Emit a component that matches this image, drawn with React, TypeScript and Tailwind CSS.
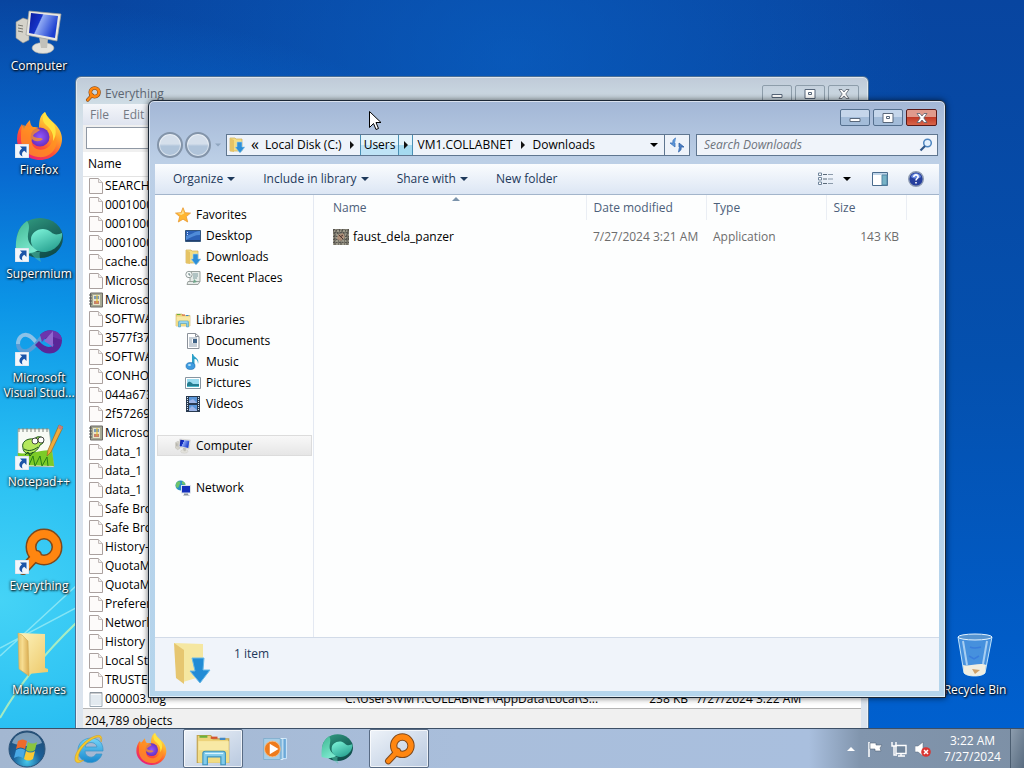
import React from 'react';

type IconProps = { className?: string };

const ComputerIcon = ({ className }: IconProps) => (
  <svg viewBox="0 0 48 48" className={className} aria-hidden="true">
    <defs>
      <linearGradient id="pcScreen" x1="0" y1="0" x2="1" y2=".4">
        <stop offset="0" stopColor="#0a1a9c" />
        <stop offset=".42" stopColor="#1533c8" />
        <stop offset=".46" stopColor="#8fa9f4" />
        <stop offset="1" stopColor="#1c3fd0" />
      </linearGradient>
    </defs>
    <path d="M1 14l7-4 6 2v20l-6 3-7-5z" fill="#d5d3ca" stroke="#8f8f8a" strokeWidth=".6" />
    <path d="M3 17l5 1M3 20l5 1M3 23l5 1" stroke="#77776f" strokeWidth="1" />
    <ellipse cx="28" cy="40" rx="11" ry="5.500" fill="#e4e3dd" stroke="#a5a59f" strokeWidth=".6" />
    <path d="M24 29l9 2-1 9h-6z" fill="#c2c1ba" />
    <path d="M14 3l32 3-4 27-31-6z" fill="#e9e8e2" stroke="#9c9c98" strokeWidth=".7" />
    <path d="M16 5l27 3-3 22-26-5z" fill="url(#pcScreen)" />
  </svg>
);

const FirefoxIcon = ({ className }: IconProps) => (
  <svg viewBox="0 0 48 48" className={className} aria-hidden="true">
    <defs>
      <linearGradient id="ffBody" x1=".8" y1="0" x2=".2" y2="1">
        <stop offset="0" stopColor="#fff44f" />
        <stop offset=".35" stopColor="#ffa52a" />
        <stop offset=".65" stopColor="#ff4f35" />
        <stop offset="1" stopColor="#e31587" />
      </linearGradient>
      <radialGradient id="ffGlobe">
        <stop offset="0" stopColor="#9059ff" />
        <stop offset="1" stopColor="#6a2fc0" />
      </radialGradient>
    </defs>
    <path d="M30 0c2 5 6 8 10 12 4 4 7 9 7 15 0 12-10 21-22 21S2 39 2 27c0-6 2-11 5-15l2 5c1-3 3-6 6-9 0 3 1 6 3 7 2 0 4 0 6 1 0-7 1-13 6-16z" fill="url(#ffBody)" />
    <circle cx="25" cy="25" r="9.500" fill="url(#ffGlobe)" />
    <path d="M8 13c3 1 6 2 9 2 3 0 6 1 8 3-2 2-6 3-7 6 4 3 7 1 10 3-3 3-8 3-11 0-2 7 5 13 13 10 8-3 9-12 5-19 5 4 8 9 6 16-3 8-10 12-18 11-10-1-18-9-17-20 0-5 0-9 2-12z" fill="#ff9520" opacity=".75" />
    <path d="M30 0c-3 5-3 9 1 13 5 4 8 9 7 16 4-6 3-12 1-17-4-4-8-7-9-12z" fill="#ffe340" />
  </svg>
);

const SupermiumIcon = ({ className }: IconProps) => (
  <svg viewBox="0 0 48 48" className={className} aria-hidden="true">
    <defs>
      <linearGradient id="smBall" x1=".2" y1="0" x2=".8" y2="1">
        <stop offset="0" stopColor="#7af0d6" />
        <stop offset="1" stopColor="#229c8c" />
      </linearGradient>
      <linearGradient id="smRing" x1="0" y1="0" x2=".6" y2="1">
        <stop offset="0" stopColor="#34a184" />
        <stop offset=".5" stopColor="#1f7366" />
        <stop offset="1" stopColor="#0f4d4b" />
      </linearGradient>
      <linearGradient id="smWedge" x1="0" y1="0" x2=".5" y2="1">
        <stop offset="0" stopColor="#3fb692" />
        <stop offset="1" stopColor="#7be8cd" />
      </linearGradient>
    </defs>
    <ellipse cx="25" cy="22" rx="23" ry="20" fill="url(#smRing)" />
    <path d="M12 5C3 11 0 22 1 36c9 3 16 2 23-2-8-3-12-8-11-16 1-5 2-9-1-13z" fill="url(#smWedge)" />
    <path d="M16 23c0-8 12-14 20-7 4 4 8 2 11 1 1 10-8 19-18 19-8 0-14-6-13-13z" fill="url(#smBall)" />
    <path d="M15 36c3 5 7 8 11 10-1-3-2-7-1-10z" fill="#53c9ae" opacity=".5" />
  </svg>
);

const VisualStudioIcon = ({ className }: IconProps) => (
  <svg viewBox="0 0 48 48" className={className} aria-hidden="true">
    <path d="M3 24c0-6 4-10 9-9 6 1 9 8 15 14" fill="none" stroke="#8cc2e8" strokeWidth="4" />
    <path d="M3 24c0 5 4 8 9 7 7-2 10-9 16-15" fill="none" stroke="#5a9cd6" strokeWidth="4" />
    <path d="M25 15c6-8 21-6 22 5 0 13-14 18-23 9l-4-4 4-4c6 7 11 7 15 4z" fill="#5a2699" />
    <path d="M25 15c6-7 21-6 22 5l-9-3c-4-2-7 0-11 5z" fill="#6c35ad" />
    <path d="M38 11v16l-9-6z" fill="#8f68cf" />
  </svg>
);

const NotepadIcon = ({ className }: IconProps) => (
  <svg viewBox="0 0 48 48" className={className} aria-hidden="true">
    <path d="M3 5h31l5 38-36-1z" fill="#f8fbf5" stroke="#9ba89a" strokeWidth=".7" />
    <path d="M4 4v4M8 4v4M12 4v4M16 4v4M20 4v4M24 4v4M28 4v4M32 4v4" stroke="#7b837d" strokeWidth="1" />
    <path d="M3 29c9 2 23-3 34-3l2 16-36-1z" fill="#7ccb27" />
    <path d="M10 41l2-8 2 8 4-9 2 10 5-10 2 10 5-9 1 9" fill="none" stroke="#287f17" />
    <path d="M8 24c-2-6 4-10 11-9l3-2c7-2 9 6 3 8-2 5-7 10-14 8-2-1-3-3-3-5z" fill="#b4e85c" stroke="#1e5d1c" strokeWidth="1" />
    <circle cx="20" cy="17" r="3" fill="#fff" stroke="#222" strokeWidth=".8" />
    <circle cx="26" cy="16" r="3" fill="#fff" stroke="#222" strokeWidth=".8" />
    <path d="M9 25c5 3 10 1 14-2M10 31l3-3 2 4 3-4" stroke="#174f1a" fill="none" />
    <path d="M44 1l4 2-12 25-4 4 1-6z" fill="#efac3c" stroke="#9b6722" strokeWidth=".7" />
    <path d="M44 1l4 2-2 3-3-2z" fill="#c27c83" />
  </svg>
);

// magnifier with a ring, the handle points down left
const EverythingIcon = ({ className }: IconProps) => (
  <svg viewBox="0 0 48 48" className={className} aria-hidden="true">
    <path d="M22 27L8 42" stroke="#7e481b" strokeWidth="10" strokeLinecap="round" />
    <circle cx="29" cy="19" r="13" fill="none" stroke="#7e481b" strokeWidth="11" />
    <path d="M22 27L8 42" stroke="#ff8610" strokeWidth="7" strokeLinecap="round" />
    <circle cx="29" cy="19" r="13" fill="none" stroke="#ff8610" strokeWidth="8" />
  </svg>
);

const FolderIcon = ({ className }: IconProps) => (
  <svg viewBox="0 0 48 48" className={className} aria-hidden="true">
    <defs>
      <linearGradient id="folderFront" x1="0" y1="0" x2="1" y2="0">
        <stop offset="0" stopColor="#e3c069" />
        <stop offset=".4" stopColor="#f7dd91" />
        <stop offset="1" stopColor="#d9ab50" />
      </linearGradient>
      <linearGradient id="folderBack" x1="0" y1="0" x2="1" y2="1">
        <stop offset="0" stopColor="#fdf3bd" />
        <stop offset="1" stopColor="#edc96a" />
      </linearGradient>
    </defs>
    <path d="M3 1l27 1v34l3 1v3l-20 2z" fill="url(#folderBack)" />
    <path d="M3 1l4 2 6 6 1 35L4 37z" fill="url(#folderFront)" stroke="#d0ab58" strokeWidth=".6" />
  </svg>
);

const DownloadsIcon = ({ className }: IconProps) => (
  <svg viewBox="0 0 48 48" className={className} aria-hidden="true">
    <path d="M7 3l29 1v32l-20 6z" fill="#f5e7a1" />
    <path d="M7 3l10 7v34L9 38z" fill="#e6c670" />
    <path d="M25 18h12l-1 12h7L33 43 23 31h5z" fill="#218bd5" stroke="#69bae8" />
  </svg>
);

// same folder, filled out to the edges so that it reads at small sizes
const DownloadsSmallIcon = ({ className = 'size-4 shrink-0' }: IconProps) => (
  <svg viewBox="0 0 16 16" className={className} aria-hidden="true">
    <path d="M1 1h5l1 1h6v12H1z" fill="#f3dd83" stroke="#cfae55" strokeWidth=".7" />
    <path d="M1 1l4 2v12l-4-1z" fill="#e5c365" />
    <path d="M8 5h5v5h3l-5 6-5-6h2z" fill="#2d8fd8" stroke="#9dd2f2" strokeWidth=".6" />
  </svg>
);

const RecycleBinIcon = ({ className }: IconProps) => (
  <svg viewBox="0 0 48 48" className={className} aria-hidden="true">
    <path d="M7 5l6 36c3 4 18 4 21 0l7-36z" fill="#7fbbee" fillOpacity=".55" stroke="#bfe3fb" />
    <path d="M12 33c4 2 18-3 23 0l-1 8c-3 4-18 4-21 0z" fill="#f0eee1" />
    <path d="M21 37l8 1-5 4z" fill="#cfa168" />
    <path d="M12 9l4 24M36 9l-4 23" stroke="#e6f6ff" strokeOpacity=".6" strokeWidth="2" />
    <path d="M19 15c4 2 7 1 11 0M18 24l5 3 5-3" stroke="#397ddc" fill="none" strokeWidth="1.500" />
    <ellipse cx="24" cy="5" rx="17" ry="3" fill="#5794d0" stroke="#e3f3ff" />
  </svg>
);

const ShortcutArrow = () => (
  <svg viewBox="0 0 14 14" className="absolute bottom-0.5 left-0 size-3.5" aria-hidden="true">
    <path d="M0 0h14v14H0z" fill="#f2f6fb" stroke="#b9c9da" strokeWidth=".6" />
    <path d="M5 2.500h6.500V9L9.300 6.800C7 8 6.500 10 7.500 12.500 3.500 11 3.500 7 7 4.600z" fill="#1b54a8" />
  </svg>
);

const FileIcon = () => (
  <svg viewBox="0 0 14 16" className="h-4 w-3.5 shrink-0" aria-hidden="true">
    <path d="M.5.5h9l4 4v11H.5z" fill="#fdfbfa" stroke="#aaa19f" />
    <path d="M9.500.5v4h4" fill="#eee" stroke="#c4bcba" />
  </svg>
);

const EventLogIcon = () => (
  <svg viewBox="0 0 14 16" className="h-4 w-3.5 shrink-0" aria-hidden="true">
    <path d="M1.500 1h12v14h-12z" fill="#a7a994" stroke="#6c6964" />
    <path d="M4 3h7v10H4z" fill="#e9e4c7" />
    <path d="M5 4h5v3H5z" fill="#7c9bb9" />
    <path d="M5 9h5v3H5z" fill="#c7806c" />
    <path d="M8 3v8" stroke="#e3b921" />
    <path d="M0 3h3M0 6h3M0 9h3M0 12h3" stroke="#555" />
  </svg>
);

const TextFileIcon = () => (
  <svg viewBox="0 0 14 16" className="h-4 w-3.5 shrink-0" aria-hidden="true">
    <path d="M1 1.500h12v14H1z" fill="#f8fbfd" stroke="#9caab5" />
    <path d="M2 5h10M2 7h10M2 9h10M2 11h10M2 13h10" stroke="#bccbd5" strokeWidth=".7" />
    <path d="M2 1v2M4 1v2M6 1v2M8 1v2M10 1v2M12 1v2" stroke="#777" strokeWidth=".7" />
  </svg>
);

const StarIcon = () => (
  <svg viewBox="0 0 16 16" className="size-4 shrink-0" aria-hidden="true">
    <path d="M8 .7l2 5 5.500.4-4.200 3.500 1.400 5.400L8 12.200 3.300 15l1.400-5.400L.5 6.100 6 5.700z" fill="#ffb52e" stroke="#e89a35" strokeWidth=".8" />
    <path d="M8 2.500l1.200 4-3 1.500-3.500-1.500 3.800-.2z" fill="#ffe08a" />
  </svg>
);

const DesktopIcon = () => (
  <svg viewBox="0 0 16 16" className="size-4 shrink-0" aria-hidden="true">
    <path d="M.5 2.500h15v11H.5z" fill="#2c62b8" stroke="#34567d" />
    <path d="M1 8c5-1 9-5 14-5v4c-5 0-9 2-14 5z" fill="#4f8bd8" />
    <path d="M1 12h14v1H1z" fill="#203f70" />
    <path d="M2 4h1v1H2zM2 6h1v1H2z" fill="#cfe2fb" />
  </svg>
);

const RecentIcon = () => (
  <svg viewBox="0 0 16 16" className="size-4 shrink-0" aria-hidden="true">
    <path d="M5 1.500h10v10H5zM3 11.500h12l-2 3H2z" fill="#e6ebe8" stroke="#9aa19e" />
    <path d="M8 4h5M8 6h5M8 8h4" stroke="#7c9b9e" />
    <circle cx="4" cy="4.500" r="3.200" fill="#f7faf9" stroke="#959f9d" />
    <path d="M4 3v2h1.500" stroke="#466" fill="none" strokeWidth=".8" />
    <path d="M9 9l3 3-4 1z" fill="#70a78c" />
  </svg>
);

const LibrariesIcon = ({ className = 'size-4 shrink-0' }: IconProps) => (
  <svg viewBox="0 0 32 32" className={className} aria-hidden="true">
    <path d="M2 4h12l2 3h14v21H2z" fill="#edd37a" stroke="#c1a24e" />
    <path d="M4 4h7v2H4z" fill="#69b13d" />
    <path d="M14 5h6v2h-6z" fill="#d4542f" />
    <path d="M22 6h5v2h-5z" fill="#4288c5" />
    <path d="M3 9h27v19H3z" fill="#f8e9a5" />
    <path d="M3 17h27v11H3z" fill="#f0dc84" />
    <path d="M7 30V20c0-1 1-2 2-2h16c1 0 2 1 2 2v10h-4v-7H11v7z" fill="#82cbea" stroke="#3d93bd" />
    <path d="M9 20h16" stroke="#d9f4ff" />
  </svg>
);

const DocumentsIcon = () => (
  <svg viewBox="0 0 16 16" className="size-4 shrink-0" aria-hidden="true">
    <path d="M2.500.5h8l3.500 3v12H2.500z" fill="#fff" stroke="#8b9199" />
    <path d="M10.500.5v3H14" fill="none" stroke="#8b9199" />
    <path d="M4 5h8M4 7h3M4 9h3M4 11h8M4 13h8" stroke="#8d9eae" />
    <path d="M8 6h4v4H8z" fill="#3f6387" />
  </svg>
);

const MusicIcon = () => (
  <svg viewBox="0 0 16 16" className="size-4 shrink-0" aria-hidden="true">
    <path d="M8 0c1 4 7 4 5 10 0-4-2-5-3.500-5v8H7V0z" fill="#2da1c9" />
    <ellipse cx="5.500" cy="12" rx="4.500" ry="3.500" fill="#3e9be0" stroke="#1969ac" strokeWidth=".6" />
    <ellipse cx="4.500" cy="11" rx="1.500" ry="1" fill="#b6e2fa" />
  </svg>
);

const PicturesIcon = () => (
  <svg viewBox="0 0 16 16" className="size-4 shrink-0" aria-hidden="true">
    <path d="M.5 2.500h15v11H.5z" fill="#fff" stroke="#8795a0" />
    <path d="M2 4h12v8H2z" fill="#9bdcf0" />
    <path d="M2 9c2-4 4-2 6 0h6v3H2z" fill="#257d91" />
    <path d="M2 11h12v1H2z" fill="#4cb7c9" />
  </svg>
);

const VideosIcon = () => (
  <svg viewBox="0 0 16 16" className="size-4 shrink-0" aria-hidden="true">
    <path d="M1 0h14v16H1z" fill="#293a50" />
    <path d="M4 1h8v6H4zM4 9h8v6H4z" fill="#5a96d9" />
    <path d="M4 5l4-2 4 4H4zM4 13l3-3 5 4v1H4z" fill="#9eb5e6" />
    <path d="M2.500 1v14M13.500 1v14" stroke="#dbe7ef" strokeDasharray="1 1" />
  </svg>
);

const NetworkIcon = () => (
  <svg viewBox="0 0 16 16" className="size-4 shrink-0" aria-hidden="true">
    <circle cx="5.500" cy="5.500" r="5" fill="#2a91c7" />
    <path d="M2 2c3-2 4 1 3 2s-1 4-3 4C0 6 1 3 2 2zM7 1c3 1 4 3 3 4L7 4z" fill="#6dc46c" />
    <path d="M6 5h10v8.500H6z" fill="#dce2eb" />
    <path d="M7 6h8v6.500H7z" fill="#1530bd" />
    <path d="M9 13.500h4v1l2 1H8l1-1z" fill="#89939f" />
  </svg>
);

const AppIcon = () => (
  <svg viewBox="0 0 16 16" className="size-4 shrink-0" aria-hidden="true">
    <path d="M0 0h16v16H0z" fill="#747166" />
    <path d="M0 1h16M1 4h15M0 7h16M0 10h16M0 13h16" stroke="#3a3b3a" strokeDasharray="2 1 1 2" />
    <path d="M1 2h15M0 6h16M0 9h15M0 12h16M0 15h16" stroke="#c7c5b1" strokeDasharray="1 2 2 1" />
    <path d="M3 0v16M8 0v16M13 0v16" stroke="#a9a795" strokeDasharray="1 3" />
    <path d="M5 6l5-2 2 4-4 4-4-2z" fill="#b9947c" opacity=".8" />
    <path d="M6 6l4 4M10 6l-3 2" stroke="#4b3431" />
  </svg>
);

const IEIcon = ({ className }: IconProps) => (
  <svg viewBox="0 0 32 32" className={className} aria-hidden="true">
    <defs>
      <linearGradient id="ieBlue" x1="0" y1="0" x2="0" y2="1">
        <stop offset="0" stopColor="#76d5f8" />
        <stop offset="1" stopColor="#1687ce" />
      </linearGradient>
    </defs>
    <path d="M30 18H12c0 7 9 8 11 3h6c-4 13-24 11-24-4C5 2 31 0 30 18zm-6-4c-1-6-11-6-12 0z" fill="url(#ieBlue)" stroke="#3c93c4" strokeWidth=".7" />
    <path d="M28 9c2-5 0-8-6-6C12 6 1 19 2 27c1 4 5 3 9 0-4 1-6 1-6-2C5 18 14 8 22 5c4-2 6-1 6 4z" fill="#f6c82c" stroke="#ce9b1f" strokeWidth=".5" />
  </svg>
);

const MediaPlayerIcon = ({ className }: IconProps) => (
  <svg viewBox="0 0 32 32" className={className} aria-hidden="true">
    <path d="M10 4h19v23H10z" fill="#6ba8d8" stroke="#d9efff" />
    <path d="M6 4h19v24H6z" fill="#8bbfe3" stroke="#e5f3fc" />
    <path d="M3 4h19v24H3z" fill="#a7cee7" stroke="#7eaccc" />
    <circle cx="13" cy="16" r="9" fill="#ee7b1c" stroke="#f7bd82" />
    <path d="M10 10l10 6-10 6z" fill="#fff" />
  </svg>
);

const StartOrb = () => (
  <svg viewBox="0 0 40 40" className="size-10" aria-hidden="true">
    <defs>
      <radialGradient id="orb" cx=".5" cy=".85" r=".85">
        <stop offset="0" stopColor="#45c8ec" />
        <stop offset=".45" stopColor="#1b5f98" />
        <stop offset="1" stopColor="#214a71" />
      </radialGradient>
    </defs>
    <circle cx="20" cy="20" r="18" fill="url(#orb)" stroke="#2b5379" />
    <path d="M5 14C9 0 31 0 35 14c-9 4-20 4-30 0z" fill="#c7dcec" opacity=".55" />
    <path d="M11 12c3-2 6-2 9 0l-2 8c-3-2-6-2-9 0z" fill="#ed6b2c" />
    <path d="M21 13c3 2 6 2 9 0l-2 8c-3 2-6 2-9 0z" fill="#8ac53f" />
    <path d="M9 21c3-2 6-2 9 0l-2 8c-3-2-6-2-9 0z" fill="#49a9e5" />
    <path d="M19 22c3 2 6 2 9 0l-2 8c-3 2-6 2-9 0z" fill="#fbc934" />
  </svg>
);

const Caret = ({ className = 'ml-1 h-1 w-2' }: IconProps) => (
  <svg viewBox="0 0 8 4" className={className} aria-hidden="true">
    <path d="M0 0h8L4 4z" fill="currentColor" />
  </svg>
);

const RightCaret = () => (
  <svg viewBox="0 0 4 8" className="h-2 w-1" aria-hidden="true">
    <path d="M0 0l4 4-4 4z" fill="#111" />
  </svg>
);

const desktopIcons = [
  { label: 'Computer', Icon: ComputerIcon },
  { label: 'Firefox', Icon: FirefoxIcon, shortcut: true },
  { label: 'Supermium', Icon: SupermiumIcon, shortcut: true },
  { label: 'Microsoft Visual Stud...', Icon: VisualStudioIcon, shortcut: true },
  { label: 'Notepad++', Icon: NotepadIcon, shortcut: true },
  { label: 'Everything', Icon: EverythingIcon, shortcut: true },
  { label: 'Malwares', Icon: FolderIcon },
];

type ResultRow = { name: string; kind?: 'log' | 'text'; path?: string; size?: string; date?: string };

const results: ResultRow[] = [
  { name: 'SEARCH' },
  { name: '00010000' },
  { name: '00010000' },
  { name: '00010000' },
  { name: 'cache.dat' },
  { name: 'Microsoft' },
  { name: 'Microsoft', kind: 'log' },
  { name: 'SOFTWARE' },
  { name: '3577f377' },
  { name: 'SOFTWARE' },
  { name: 'CONHOST' },
  { name: '044a6736' },
  { name: '2f57269b' },
  { name: 'Microsoft', kind: 'log' },
  { name: 'data_1' },
  { name: 'data_1' },
  { name: 'data_1' },
  { name: 'Safe Bro' },
  { name: 'Safe Bro' },
  { name: 'History-' },
  { name: 'QuotaMa' },
  { name: 'QuotaMa' },
  { name: 'Preferen' },
  { name: 'Network' },
  { name: 'History' },
  { name: 'Local St' },
  { name: 'TRUSTE' },
  {
    name: '000003.log',
    kind: 'text',
    path: 'C:\\Users\\VM1.COLLABNET\\AppData\\Local\\S...',
    size: '238 KB',
    date: '7/27/2024 3:22 AM',
  },
];

const favorites = [
  { label: 'Desktop', icon: <DesktopIcon /> },
  { label: 'Downloads', icon: <DownloadsSmallIcon /> },
  { label: 'Recent Places', icon: <RecentIcon /> },
];

const libraries = [
  { label: 'Documents', icon: <DocumentsIcon /> },
  { label: 'Music', icon: <MusicIcon /> },
  { label: 'Pictures', icon: <PicturesIcon /> },
  { label: 'Videos', icon: <VideosIcon /> },
];

function DesktopItem({ label, Icon, shortcut }: { label: string; Icon: React.FC<IconProps>; shortcut?: boolean }) {
  return (
    <button className="flex h-[104px] w-full flex-col items-center pt-2">
      <span className="relative block size-12">
        <Icon className="size-12" />
        {shortcut && <ShortcutArrow />}
      </span>
      <span className="mt-0.5 text-center leading-[15px] text-white [text-shadow:1px_1px_2px_#000,0_0_3px_#000]">{label}</span>
    </button>
  );
}

function WindowButtons({ active }: { active?: boolean }) {
  const base = active
    ? 'bg-linear-to-b from-[#c5d6eb] from-50% to-[#a3bcd9] to-50% border-[#55708f]'
    : 'border-[#8d9daa]';
  return (
    <div className="flex gap-[3px]">
      <button aria-label="Minimize" className={`flex h-[17px] w-[30px] items-center justify-center rounded-xs border ${base}`}>
        <svg viewBox="0 0 12 10" className="h-2.5 w-3" aria-hidden="true">
          <path d="M1 5.500h10v3H1z" fill="#fff" stroke="#58677a" />
        </svg>
      </button>
      <button aria-label="Maximize" className={`flex h-[17px] w-[30px] items-center justify-center rounded-xs border ${base}`}>
        <svg viewBox="0 0 12 10" className="h-2.5 w-3" aria-hidden="true">
          <path d="M1 .5h10v9H1zM4.500 3.500h3v2h-3z" fill="#fff" stroke="#58677a" />
        </svg>
      </button>
      <button
        aria-label="Close"
        className={`flex h-[17px] w-[31px] items-center justify-center rounded-xs border ${
          active ? 'border-[#5a1a18] bg-linear-to-b from-[#e09a8c] from-45% via-[#c23a26] via-50% to-[#d8654a]' : base
        }`}
      >
        <svg viewBox="0 0 12 10" className="h-2.5 w-3" aria-hidden="true">
          <path d="M1 .5h3l2 2.500L8 .5h3L7.800 5 11 9.500H8L6 7 4 9.500H1L4.200 5z" fill="#fff" stroke="#585f6c" strokeWidth=".8" />
        </svg>
      </button>
    </div>
  );
}

function EverythingWindow() {
  return (
    <section
      aria-label="Everything"
      className="absolute top-[76px] left-[75px] w-[794px] rounded-t-md border border-[#4a6f95] bg-[linear-gradient(180deg,#bfcad8_0,#cfdde5_27px,#dbe4ee_60px)] px-[7px] shadow-[inset_0_0_0_1px_rgba(255,255,255,0.5)]"
    >
      <header className="flex h-[27px] items-start justify-between pt-2 pr-0.5">
        <div className="flex items-center gap-1 pt-px pl-0.5 text-[#5c6672]">
          <EverythingIcon className="size-4" />
          <h1>Everything</h1>
        </div>
        <WindowButtons />
      </header>
      <nav className="flex h-[21px] items-center gap-3.5 bg-linear-to-b from-[#f4f6fa] to-[#dfe4ef] pl-[7px] text-[#747983]">
        <button>File</button>
        <button>Edit</button>
      </nav>
      <div className="bg-[#f0f0f0] px-[3px] pt-0.5 pb-[3px]">
        <input aria-label="Search files" className="block h-[22px] w-full border border-[#8f98a4] bg-white px-1" />
      </div>
      <div className="border-b border-[#b4b4b4] bg-white">
        <table className="w-full table-fixed">
          <colgroup>
            <col className="w-[258px]" />
            <col className="w-[265px]" />
            <col className="w-[86px]" />
            <col />
          </colgroup>
          <thead>
            <tr className="h-6 border-b border-[#e3e3e3]">
              <th className="p-0 pl-[5px] text-left font-normal">Name</th>
              <th /><th /><th />
            </tr>
          </thead>
          <tbody>
            {results.map((row, i) => (
              <tr key={i} className="h-[19px]">
                <td className="p-0 pl-1.5">
                  <span className="flex items-center gap-0.5 whitespace-nowrap">
                    {row.kind === 'log' ? <EventLogIcon /> : row.kind === 'text' ? <TextFileIcon /> : <FileIcon />}
                    {row.name}
                  </span>
                </td>
                <td className="p-0 pl-1 whitespace-nowrap">{row.path}</td>
                <td className="p-0 pr-1 text-right">{row.size}</td>
                <td className="p-0 pl-1">{row.date}</td>
              </tr>
            ))}
          </tbody>
        </table>
      </div>
      <footer className="h-[30px] bg-[#f0f0f0] pt-1 pl-0.5">204,789 objects</footer>
    </section>
  );
}

function AddressBar() {
  const roundButton =
    'size-[26px] shrink-0 rounded-full border-2 border-[#8394a9] bg-linear-to-b from-[#d5dfeb] from-45% to-[#b0c4da] to-55% shadow-[inset_0_0_0_1px_rgba(255,255,255,0.5)]';
  return (
    <div className="flex h-[22px] items-center">
      <div className="flex w-[69px] shrink-0 items-center gap-0.5">
        <button aria-label="Back" className={roundButton} />
        <button aria-label="Forward" className={roundButton} />
        <button aria-label="Recent pages" className="flex w-2.5 justify-center text-[#90a6c0]">
          <Caret className="h-1 w-1.5" />
        </button>
      </div>
      <div className="flex h-[22px] flex-1 items-stretch border border-[#5f7690] bg-[#eef3fa]">
        <span className="flex items-center pl-0.5">
          <DownloadsSmallIcon />
        </span>
        <button className="px-1.5 pb-0.5 text-base leading-none">«</button>
        <button className="pr-2">Local Disk (C:)</button>
        <span className="flex items-center pr-1.5"><RightCaret /></span>
        <button className="border-x border-[#4a90b5] bg-linear-to-b from-[#e3f3fb] from-50% to-[#bfe3f6] to-50% px-[3px]">Users</button>
        <button aria-label="Users folders" className="flex w-3.5 items-center justify-center border-r border-[#4a90b5] bg-linear-to-b from-[#e3f3fb] from-50% to-[#a5daf0] to-50%">
          <RightCaret />
        </button>
        <button className="px-1">VM1.COLLABNET</button>
        <span className="flex items-center px-1"><RightCaret /></span>
        <button className="px-1">Downloads</button>
        <button aria-label="Previous locations" className="ml-auto flex w-5 items-center justify-center">
          <Caret className="h-1 w-2" />
        </button>
        <button aria-label="Refresh" className="flex w-[25px] items-center justify-center border-l border-[#5f7690]">
          <svg viewBox="0 0 16 16" className="size-4" aria-hidden="true">
            <path d="M7 1C4 2 3.500 4 4 6H1l5 4V6" fill="#5d97d8" stroke="#3d72ba" strokeWidth=".8" />
            <path d="M9 15c3-1 3.500-3 3-5h3l-5-4v4" fill="#4b7fc4" stroke="#2f5fa5" strokeWidth=".8" />
          </svg>
        </button>
      </div>
      <div className="ml-1.5 flex h-[22px] w-[242px] items-center border border-[#5f7690] bg-[#f0f4fa] pr-1">
        <input
          type="search"
          aria-label="Search Downloads"
          placeholder="Search Downloads"
          className="min-w-0 flex-1 bg-transparent pl-[7px] outline-none placeholder:text-[#6d737c] placeholder:italic"
        />
        <svg viewBox="0 0 14 14" className="size-3.5" aria-hidden="true">
          <circle cx="8.500" cy="5" r="3.800" fill="#e4f1fd" stroke="#4e86c0" strokeWidth="1.500" />
          <path d="M6 8l-4.500 4.500" stroke="#2e5688" strokeWidth="2.200" />
        </svg>
      </div>
    </div>
  );
}

function Toolbar() {
  return (
    <div className="flex h-[31px] items-center border-b border-[#a3b5cb] bg-linear-to-b from-[#fafcfe] to-[#dce6f4] pr-[15px] pl-[18px] text-[#1e395b]">
      <button className="flex items-center">Organize<Caret /></button>
      <button className="ml-7 flex items-center">Include in library<Caret /></button>
      <button className="ml-7 flex items-center">Share with<Caret /></button>
      <button className="ml-7">New folder</button>
      <div className="ml-auto flex items-center">
        <button aria-label="Change your view" className="flex items-center">
          <svg viewBox="0 0 16 14" className="h-3.5 w-4" aria-hidden="true">
            <path d="M1.500 1h3v2.500h-3zM1.500 5.500h3V8h-3zM1.500 10h3v2.500h-3z" fill="#fff" stroke="#71869c" />
            <path d="M6 2.500h4M6 7h4M6 11.500h4" stroke="#5b6a79" />
            <path d="M11 2.500h5M11 7h5M11 11.500h5" stroke="#8b9aaa" />
          </svg>
          <Caret className="ml-2.5 h-1 w-2 text-black" />
        </button>
        <button aria-label="Show the preview pane" className="ml-[21px]">
          <svg viewBox="0 0 16 14" className="h-3.5 w-4" aria-hidden="true">
            <path d="M.5.5h15v13H.5z" fill="#fff" stroke="#496b8d" />
            <path d="M1 1h14v2H1z" fill="#bed4e8" />
            <path d="M10 3h5v10h-5z" fill="#77b3c7" stroke="#5587a5" />
          </svg>
        </button>
        <button aria-label="Get help" className="ml-5">
          <svg viewBox="0 0 16 16" className="size-4" aria-hidden="true">
            <circle cx="8" cy="8" r="7.300" fill="#263f9d" stroke="#8d9bb3" strokeWidth="1.400" />
            <path d="M3 6c1-5 9-5 10 0-3 2-7 2-10 0z" fill="#6d8ce0" />
            <path d="M5.800 6c0-3 4.500-2.700 4.300 0C10 7.500 8 7.600 8 9.500M8 11v1.500" stroke="#fff" strokeWidth="1.600" fill="none" />
          </svg>
        </button>
      </div>
    </div>
  );
}

function SideLink({ icon, label, nested, selected }: { icon: React.ReactNode; label: string; nested?: boolean; selected?: boolean }) {
  return (
    <a
      href="#"
      className={`flex h-[21px] items-center gap-[5px] border ${nested ? 'pl-[27px]' : 'pl-[17px]'} ${
        selected ? 'border-[#dcdcdc] bg-linear-to-b from-[#f8f8f8] to-[#e6e6e6]' : 'border-transparent'
      }`}
    >
      {icon}
      {label}
    </a>
  );
}

function ExplorerWindow() {
  return (
    <section
      aria-label="Downloads"
      className="absolute top-[100px] left-[148px] flex h-[598px] w-[798px] flex-col rounded-t-md border border-[#1b2735] bg-[linear-gradient(180deg,#a3b7d6_0,#bccfe6_60px,#b9d1ea_200px,#b5d5ec_100%)] px-1.5 pb-1.5 shadow-[0_0_6px_rgba(0,0,0,0.6),inset_0_0_0_1px_rgba(255,255,255,0.6)]"
    >
      <header className="flex h-[33px] justify-end pt-2 pr-0.5">
        <WindowButtons active />
      </header>
      <div className="pr-px pb-2 pl-0.5">
        <AddressBar />
      </div>
      <Toolbar />
      <div className="flex min-h-0 flex-1 bg-[#fdfefe]">
        <nav className="flex w-[159px] flex-col gap-[21px] border-r border-[#e4e9f2] pt-[9px] pr-px pl-0.5">
          <div>
            <SideLink icon={<StarIcon />} label="Favorites" />
            {favorites.map((item) => (
              <SideLink key={item.label} nested {...item} />
            ))}
          </div>
          <div>
            <SideLink icon={<LibrariesIcon />} label="Libraries" />
            {libraries.map((item) => (
              <SideLink key={item.label} nested {...item} />
            ))}
          </div>
          <SideLink icon={<ComputerIcon className="size-4 shrink-0" />} label="Computer" selected />
          <SideLink icon={<NetworkIcon />} label="Network" />
        </nav>
        <div className="relative flex-1 pl-3">
          <svg viewBox="0 0 8 4" className="absolute top-0.5 left-[138px] h-1 w-2" aria-hidden="true">
            <path d="M0 4l4-4 4 4z" fill="#7b93ab" />
          </svg>
          <table className="w-[580px] table-fixed">
            <colgroup>
              <col className="w-[260px]" />
              <col className="w-[120px]" />
              <col className="w-[120px]" />
              <col className="w-20" />
            </colgroup>
            <thead>
              <tr className="h-[25px] text-left text-[#4c607a]">
                {['Name', 'Date modified', 'Type', 'Size'].map((heading) => (
                  <th key={heading} className="border-r border-[#eaeef4] p-0 pl-[7px] font-normal">{heading}</th>
                ))}
              </tr>
            </thead>
            <tbody>
              <tr className="h-[33px] text-[#6d6d6d]">
                <td className="p-0 pl-[7px] text-black">
                  <span className="flex items-center gap-1"><AppIcon />faust_dela_panzer</span>
                </td>
                <td className="p-0 pl-[7px] whitespace-nowrap">7/27/2024 3:21 AM</td>
                <td className="p-0 pl-[7px]">Application</td>
                <td className="p-0 pr-[7px] text-right">143 KB</td>
              </tr>
            </tbody>
          </table>
        </div>
      </div>
      <footer className="flex h-[54px] border-t border-[#d2dbe8] bg-[#f0f4fa] pl-3 text-[#1e395b]">
        <DownloadsIcon className="mt-0.5 size-12" />
        <p className="mt-2 ml-[19px]">1 item</p>
      </footer>
    </section>
  );
}

const tasks = [
  { label: 'Internet Explorer', icon: <IEIcon className="size-8" /> },
  { label: 'Firefox', icon: <FirefoxIcon className="size-8" /> },
  { label: 'Windows Explorer', icon: <LibrariesIcon className="size-9" />, open: true },
  { label: 'Windows Media Player', icon: <MediaPlayerIcon className="size-7" /> },
  { label: 'Supermium', icon: <SupermiumIcon className="size-8" /> },
  { label: 'Everything', icon: <EverythingIcon className="size-8" />, open: true },
];

function Taskbar() {
  return (
    <footer className="relative z-10 flex h-10 shrink-0 items-stretch border-t border-[#3c4f66] bg-[linear-gradient(90deg,#a3b7d1_0,#a9bedb_45%,#a9bfde_79%,#8195ad_84%,#7d90a6_100%)] text-white">
      <button aria-label="Start" className="flex w-[59px] items-center pl-[7px]">
        <StartOrb />
      </button>
      <div className="flex gap-0.5">
        {tasks.map((task) => (
          <button
            key={task.label}
            aria-label={task.label}
            className={`flex w-[60px] items-center justify-center ${
              task.open ? 'rounded-xs border border-[#586b84] bg-linear-to-br from-[#eef3f9] to-[#b9c9df] shadow-[inset_0_0_0_1px_rgba(255,255,255,0.7)]' : ''
            }`}
          >
            {task.icon}
          </button>
        ))}
      </div>
      <div className="ml-auto flex items-center">
        <button aria-label="Show hidden icons" className="mr-3">
          <svg viewBox="0 0 8 4" className="h-1 w-2" aria-hidden="true">
            <path d="M0 4l4-4 4 4z" fill="#fff" />
          </svg>
        </button>
        <div className="flex gap-2">
          <svg viewBox="0 0 16 16" className="size-4" aria-hidden="true">
            <path d="M2 1v15" stroke="#fff" strokeWidth="1.500" />
            <path d="M3 2h6v2h6l-2 3 1 3H8V8H3z" fill="#fff" stroke="#56677b" strokeWidth=".6" />
          </svg>
          <svg viewBox="0 0 16 16" className="size-4" aria-hidden="true">
            <path d="M5 4.500h10v8H5z" fill="#71859b" stroke="#fff" strokeWidth="1.400" />
            <path d="M7 15h7M10 13v2" stroke="#fff" strokeWidth="1.400" />
            <path d="M1 1v4h4V1M3 5v9h3" stroke="#fff" fill="none" strokeWidth="1.400" />
          </svg>
          <svg viewBox="0 0 16 16" className="size-4" aria-hidden="true">
            <path d="M0 5h3l5-4v14l-5-4H0z" fill="#fff" stroke="#56677b" strokeWidth=".5" />
            <circle cx="11" cy="11" r="4.800" fill="#da3532" />
            <path d="M9 9l4 4M13 9l-4 4" stroke="#fff" strokeWidth="1.500" />
          </svg>
        </div>
        <p className="w-[79px] pl-1 text-center leading-4 whitespace-nowrap">
          3:22 AM
          <br />
          7/27/2024
        </p>
        <button aria-label="Show desktop" className="h-full w-3.5 border-l border-[#4b5d70] bg-linear-to-br from-[#8d9dae] to-[#596c80]" />
      </div>
    </footer>
  );
}

export default function App() {
  return (
    <main className="flex h-screen flex-col overflow-hidden bg-[#0858bd] font-['Open_Sans','Noto_Sans',sans-serif] text-[12px] leading-4 text-black">
      <div className="relative flex min-h-0 flex-1 items-end justify-between bg-[radial-gradient(ellipse_760px_600px_at_0_600px,#45d3f6_0,#26bdf2_25%,#0b93e6_50%,rgba(8,108,212,0.9)_72%,rgba(8,90,195,0)_100%),radial-gradient(ellipse_420px_300px_at_50%_60px,rgba(10,100,200,0.6),rgba(8,90,195,0)),linear-gradient(180deg,#0845a0_0,#0450ae_50%,#0060cf_100%)]">
        <svg viewBox="0 0 76 230" className="absolute bottom-0 left-0 h-[230px] w-[76px]" aria-hidden="true">
          <path d="M0 158L76 88M0 150L76 110" stroke="#b5f5f5" strokeOpacity=".6" strokeWidth="1.500" />
          <path d="M0 220C20 185 50 150 76 125" stroke="#d5fbae" strokeOpacity=".7" strokeWidth="2" fill="none" />
        </svg>
        <div className="relative flex w-[78px] flex-col self-start">
          {desktopIcons.map((item) => (
            <DesktopItem key={item.label} {...item} />
          ))}
        </div>
        <div className="relative w-[98px]">
          <DesktopItem label="Recycle Bin" Icon={RecycleBinIcon} />
        </div>
        <EverythingWindow />
        <ExplorerWindow />
        <svg viewBox="0 0 12 19" className="absolute top-[111px] left-[369px] h-[19px] w-3" aria-hidden="true">
          <path d="M.5.5v16l4-4 2.500 6 2.500-1-2.500-6h5z" fill="#fff" stroke="#000" />
        </svg>
      </div>
      <Taskbar />
    </main>
  );
}
